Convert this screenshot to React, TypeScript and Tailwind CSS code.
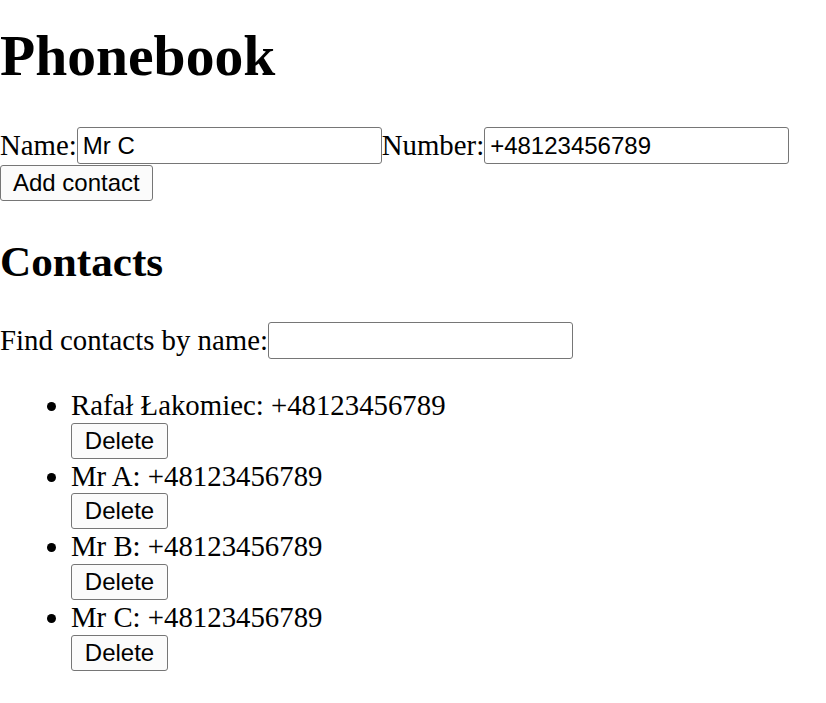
import { useState } from "react";

type Person = { name: string; number: string };

const initial: Person[] = [
  { name: "Rafał Łakomiec", number: "+48123456789" },
  { name: "Mr A", number: "+48123456789" },
  { name: "Mr B", number: "+48123456789" },
  { name: "Mr C", number: "+48123456789" },
];

const inputCls =
  "w-[305px] h-[37px] border-[1.5px] border-[#767676] rounded-[3px] px-[5px] font-['Liberation_Sans',Arial,sans-serif] text-[24px] text-black bg-white outline-none";
const buttonCls =
  "h-[36px] px-[12px] border-[1.5px] border-[#767676] rounded-[3px] bg-[#fbfbfb] font-['Liberation_Sans',Arial,sans-serif] text-[24px] leading-none text-black";

export default function App() {
  const [persons, setPersons] = useState(initial);
  const [newName, setNewName] = useState("Mr C");
  const [newNumber, setNewNumber] = useState("+48123456789");
  const [filter, setFilter] = useState("");

  const shown = persons.filter((p) =>
    p.name.toLowerCase().includes(filter.toLowerCase())
  );

  return (
    <div className="min-h-screen bg-white text-black font-['Liberation_Serif','Times_New_Roman',serif] text-[28.8px] leading-[1.15]">
      <h1 className="text-[57.6px] font-bold mt-[23px] mb-[37px]">Phonebook</h1>
      <form onSubmit={(e) => e.preventDefault()}>
        <div className="flex items-center h-[39px]">
          <span>Name:</span>
          <input className={inputCls} value={newName} onChange={(e) => setNewName(e.target.value)} />
          <span>Number:</span>
          <input className={inputCls} value={newNumber} onChange={(e) => setNewNumber(e.target.value)} />
        </div>
        <div className="flex">
          <button type="submit" className={buttonCls}>Add contact</button>
        </div>
      </form>
      <h2 className="text-[43.2px] font-bold mt-[36px] mb-[34px]">Contacts</h2>
      <div className="flex items-center h-[39px]">
        <span>Find contacts by name:</span>
        <input className={inputCls} value={filter} onChange={(e) => setFilter(e.target.value)} />
      </div>
      <ul className="list-disc pl-[71px] mt-[28px]">
        {shown.map((p) => (
          <li key={p.name}>
            <div className="leading-[34.7px]">{p.name}: {p.number}</div>
            <button
              className={buttonCls + " w-[97px]"}
              onClick={() => setPersons(persons.filter((x) => x !== p))}
            >
              Delete
            </button>
          </li>
        ))}
      </ul>
    </div>
  );
}
